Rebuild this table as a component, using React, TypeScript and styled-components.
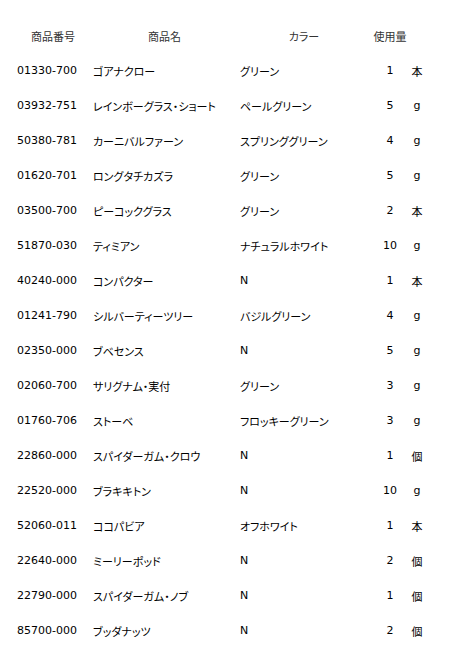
import React from "react";
import styled, { createGlobalStyle } from "styled-components";

type Item = {
  code: string;
  name: string;
  color: string;
  amount: number;
  unit: string;
};

const items: Item[] = [
  { code: "01330-700", name: "ゴアナクロー", color: "グリーン", amount: 1, unit: "本" },
  { code: "03932-751", name: "レインボーグラス・ショート", color: "ペールグリーン", amount: 5, unit: "g" },
  { code: "50380-781", name: "カーニバルファーン", color: "スプリンググリーン", amount: 4, unit: "g" },
  { code: "01620-701", name: "ロングタチカズラ", color: "グリーン", amount: 5, unit: "g" },
  { code: "03500-700", name: "ピーコックグラス", color: "グリーン", amount: 2, unit: "本" },
  { code: "51870-030", name: "ティミアン", color: "ナチュラルホワイト", amount: 10, unit: "g" },
  { code: "40240-000", name: "コンパクター", color: "N", amount: 1, unit: "本" },
  { code: "01241-790", name: "シルバーティーツリー", color: "バジルグリーン", amount: 4, unit: "g" },
  { code: "02350-000", name: "ブベセンス", color: "N", amount: 5, unit: "g" },
  { code: "02060-700", name: "サリグナム・実付", color: "グリーン", amount: 3, unit: "g" },
  { code: "01760-706", name: "ストーベ", color: "フロッキーグリーン", amount: 3, unit: "g" },
  { code: "22860-000", name: "スパイダーガム・クロウ", color: "N", amount: 1, unit: "個" },
  { code: "22520-000", name: "ブラキキトン", color: "N", amount: 10, unit: "g" },
  { code: "52060-011", name: "ココパビア", color: "オフホワイト", amount: 1, unit: "本" },
  { code: "22640-000", name: "ミーリーポッド", color: "N", amount: 2, unit: "個" },
  { code: "22790-000", name: "スパイダーガム・ノブ", color: "N", amount: 1, unit: "個" },
  { code: "85700-000", name: "ブッダナッツ", color: "N", amount: 2, unit: "個" },
];

function App() {
  return (
    <>
      <GlobalStyle />
      <Table>
        <colgroup>
          <col style={{ width: 76 }} />
          <col style={{ width: 147 }} />
          <col style={{ width: 132 }} />
          <col style={{ width: 40 }} />
          <col style={{ width: 14 }} />
        </colgroup>
        <thead>
          <Row>
            <Head>商品番号</Head>
            <Head>商品名</Head>
            <Head>カラー</Head>
            <Head>使用量</Head>
            <Head />
          </Row>
        </thead>
        <tbody>
          {items.map((item) => (
            <Row key={item.code}>
              <Cell>{item.code}</Cell>
              <Cell>{item.name}</Cell>
              <Cell>{item.color}</Cell>
              <Cell $center>{item.amount}</Cell>
              <Cell $center>{item.unit}</Cell>
            </Row>
          ))}
        </tbody>
      </Table>
    </>
  );
}

const GlobalStyle = createGlobalStyle`
  html, body {
    margin: 0;
    padding: 0;
    background: #ffffff;
  }
  body {
    font-family: "DejaVu Sans", "Noto Sans CJK JP", sans-serif;
    font-size: 11px;
    color: #000000;
    font-feature-settings: "palt";
  }
`;

const Table = styled("table")`
  table-layout: fixed;
  border-collapse: collapse;
  margin: 18px 0 0 15px;
`;

const Row = styled("tr")`
  height: 35px;
`;

const Head = styled("th")`
  padding: 0;
  font-weight: normal;
  text-align: center;
  white-space: nowrap;
  color: #333333;
`;

const Cell = styled("td")<{ $center?: boolean }>`
  padding: 0 0 0 ${(p) => (p.$center ? "0" : "2px")};
  text-align: ${(p) => (p.$center ? "center" : "left")};
  white-space: nowrap;
`;

export default App;
